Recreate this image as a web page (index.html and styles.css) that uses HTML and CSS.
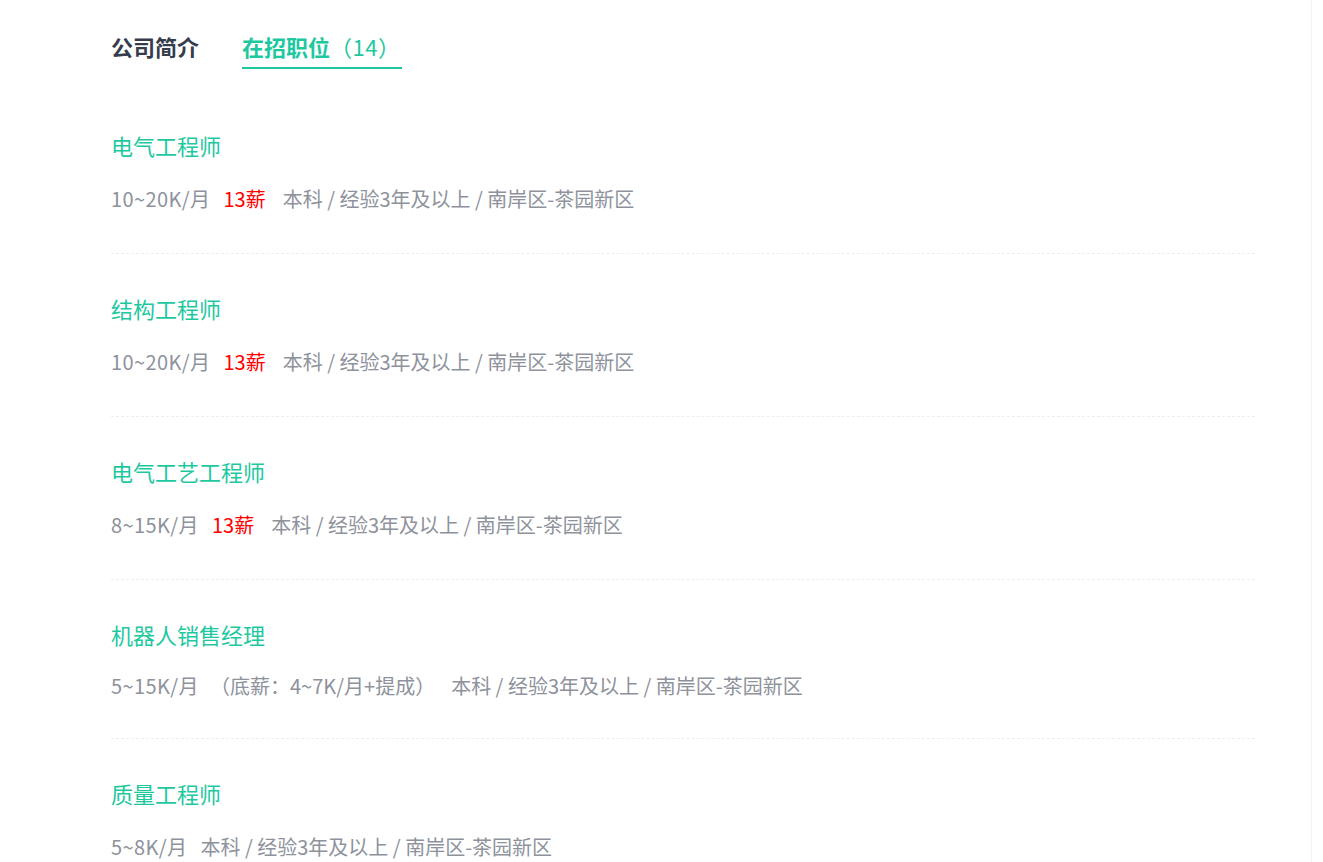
FILE: index.html
```html
<!DOCTYPE html>
<html lang="zh-CN">
<head>
<meta charset="UTF-8">
<title>在招职位</title>
<link rel="stylesheet" href="styles.css">
</head>
<body>

<div class="page">
    <div class="tabs">
        <a class="tab">公司简介</a>
        <a class="tab active">在招职位<span class="count">（14）</span></a>
    </div>

    <ul class="jobs">
        <li class="job">
            <div class="job-title">电气工程师</div>
            <div class="job-meta"><span class="salary">10~20K/月</span><span class="bonus">13薪</span><span>本科 / 经验3年及以上 / 南岸区-茶园新区</span></div>
        </li>
        <li class="job">
            <div class="job-title">结构工程师</div>
            <div class="job-meta"><span class="salary">10~20K/月</span><span class="bonus">13薪</span><span>本科 / 经验3年及以上 / 南岸区-茶园新区</span></div>
        </li>
        <li class="job">
            <div class="job-title">电气工艺工程师</div>
            <div class="job-meta"><span class="salary">8~15K/月</span><span class="bonus">13薪</span><span>本科 / 经验3年及以上 / 南岸区-茶园新区</span></div>
        </li>
        <li class="job job-short">
            <div class="job-title">机器人销售经理</div>
            <div class="job-meta"><span class="salary">5~15K/月</span><span class="note">（底薪：4~7K/月+提成）</span><span>本科 / 经验3年及以上 / 南岸区-茶园新区</span></div>
        </li>
        <li class="job">
            <div class="job-title">质量工程师</div>
            <div class="job-meta"><span class="salary">5~8K/月</span><span>本科 / 经验3年及以上 / 南岸区-茶园新区</span></div>
        </li>
    </ul>
</div>

</body>
</html>
```

FILE: styles.css
```css
html, body {
    margin: 0;
    padding: 0;
    background: #fff;
    overflow: hidden;
}
body {
    font-family: "Noto Sans CJK SC", "Noto Sans", sans-serif;
    color: #333;
}
.page {
    width: 1312px;
    height: 862px;
    border-right: 1px solid #f2f3f5;
    padding-left: 111px;
    box-sizing: border-box;
    overflow: hidden;
}
.tabs {
    display: flex;
    gap: 43px;
    padding-top: 31px;
}
.tab {
    font-size: 22px;
    line-height: 30px;
    font-weight: 700;
    color: #353c4c;
    padding-bottom: 6px;
    border-bottom: 2px solid transparent;
}
.tab.active {
    color: #1ec89f;
    border-bottom-color: #1ec89f;
    padding-right: 2px;
}
.tab .count {
    font-weight: 400;
    letter-spacing: 0.5px;
}
.jobs {
    list-style: none;
    margin: 22px 0 0;
    padding: 0;
    width: 1144px;
}
.job {
    padding: 39px 0 39px;
    border-bottom: 1px dashed #eceef0;
}
.job-short {
    padding-bottom: 37px;
}
.job-title {
    font-size: 22px;
    line-height: 30px;
    color: #1ec89f;
}
.job-meta {
    margin-top: 24px;
    font-size: 20px;
    line-height: 30px;
    color: #8e929c;
}
.job-short .job-meta {
    margin-top: 22px;
}
.salary {
    margin-right: 13px;
    letter-spacing: 0.4px;
}
.bonus {
    color: #ff0000;
    margin-right: 17px;
}
.note {
    margin-left: -2px;
    margin-right: 16px;
}
```
